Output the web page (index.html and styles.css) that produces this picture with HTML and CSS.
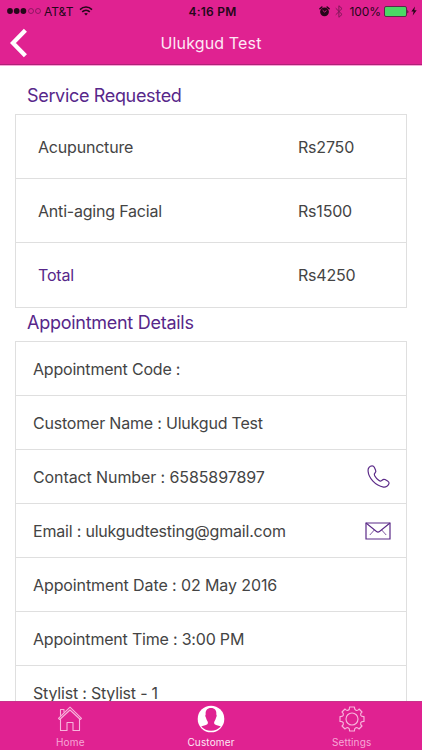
FILE: index.html
```
<!DOCTYPE html>
<html lang="en">
<head>
<meta charset="utf-8">
<meta name="viewport" content="width=device-width">
<title>Ulukgud Test</title>
<link rel="stylesheet" href="styles.css">
</head>
<body>
<div class="app">
  <header class="header">
    <div class="status">
      <div class="status-left">
        <svg width="36" height="8" viewBox="0 0 36 8"><g fill="#250719"><circle cx="3" cy="4" r="2.9"/><circle cx="9.700" cy="4" r="2.9"/><circle cx="16.400" cy="4" r="2.9"/></g><g fill="none" stroke="#6e1450" stroke-width=".7"><circle cx="24" cy="4" r="2.5"/><circle cx="31" cy="4" r="2.5"/></g></svg>
        <span class="carrier">AT&amp;T</span>
        <svg width="14" height="10" viewBox="0 0 14 10" fill="none" stroke="#250719" stroke-width="1.5"><path d="M1 3.6C4.4.2 9.600.2 13 3.600M3.200 5.900C5.400 3.800 8.600 3.800 10.800 5.900"/><path d="M7 9.500 5.100 7.600Q7 6.200 8.900 7.600Z" fill="#250719" stroke="none"/></svg>
      </div>
      <span class="clock">4:16 PM</span>
      <div class="status-right">
        <svg width="11" height="11" viewBox="0 0 11 11"><circle cx="5.500" cy="5.800" r="4.400" fill="#250719"/><path d="M.9 2.800 2.900 1M10.100 2.800 8.100 1" stroke="#250719" stroke-width="1.500" stroke-linecap="round"/><path d="M3.600 4.200 5.500 6 7.500 4.600" fill="none" stroke="#e02291" stroke-width=".9"/></svg>
        <svg class="bluetooth" width="8" height="13" viewBox="0 0 7 12" fill="none" stroke="#7d1857" stroke-width=".9"><path d="M.5 3 6.300 8.700 3.400 11.300V.7L6.300 3.300.5 9"/></svg>
        <span class="percent">100%</span>
        <svg width="25" height="11" viewBox="0 0 25 11"><rect x=".5" y=".5" width="22" height="10" rx="1.500" fill="#4bd865" stroke="#5b2949"/><path d="M23.500 3.500Q25 5.500 23.500 7.500Z" fill="#250719"/></svg>
        <svg class="bolt" width="6" height="10" viewBox="0 0 6 10"><path d="M4 .4.3 5.400H2.600L1.700 9.600 5.700 4.300H3.300Z" fill="#250719"/></svg>
      </div>
    </div>
    <div class="navbar">
      <svg class="back" width="18" height="30" viewBox="0 0 18 30"><path d="M15.400 2.200 2.900 15 15.400 27.800" fill="none" stroke="#fff" stroke-width="4.300"/></svg>
      <h1 class="title">Ulukgud Test</h1>
    </div>
  </header>

  <main class="content">
    <h2 class="heading">Service Requested</h2>
    <div class="card services">
      <div class="row"><span>Acupuncture</span><span class="price">Rs2750</span></div>
      <div class="row"><span>Anti-aging Facial</span><span class="price">Rs1500</span></div>
      <div class="row"><span class="total">Total</span><span class="price">Rs4250</span></div>
    </div>
    <h2 class="heading details-heading">Appointment Details</h2>
    <div class="card details">
      <div class="row"><span>Appointment Code :</span></div>
      <div class="row"><span>Customer Name : Ulukgud Test</span></div>
      <div class="row"><span class="numeric">Contact Number : 6585897897</span>
        <svg class="phone" width="23" height="23" viewBox="0 0 24 24" fill="none" stroke="#5b2a88" stroke-width="1.250" stroke-linejoin="round"><path d="M5.300 1C2.800 1 .8 3.300 1.100 6.200C1.700 13.500 8.700 21.600 17.200 23C19.700 23.400 22.500 21.600 23 19.200C23.200 18.200 22.600 17.400 21.500 16.700L18.800 15.200C17.400 14.500 16.600 15 15.800 15.900C14.800 17.100 13.600 16.900 12.200 15.900C10.700 14.800 9 13 8 11.200C7.200 9.800 7.400 9 8.500 8.100C9.500 7.300 9.400 6.400 8.900 5.300L7.600 2.400C7.200 1.500 6.500 1 5.300 1Z"/></svg>
      </div>
      <div class="row"><span>Email : ulukgudtesting@gmail.com</span>
        <svg class="mail" width="26" height="18" viewBox="0 0 26 18" fill="none" stroke="#5b2a88"><path d="M1 1H25V17H1Z" stroke-width="1.200"/><path d="M1 1 11.500 9.500Q13 10.700 14.500 9.500L25 1" stroke-width="1.100"/><path d="M9.300 8 4.800 13M16.700 8 21.200 13" stroke-width=".8"/></svg>
      </div>
      <div class="row"><span class="numeric">Appointment Date : 02 May 2016</span></div>
      <div class="row"><span>Appointment Time : 3:00 PM</span></div>
      <div class="row"><span>Stylist : Stylist - 1</span></div>
    </div>
  </main>

  <nav class="tabs">
    <div class="tab">
      <svg width="26" height="26" viewBox="0 0 26 26" fill="none" stroke="#f7b4dc" stroke-width="1.100" stroke-linejoin="round"><path d="M3.500 12.500V24.500H10V16.500H16V24.500H22.500V12.500"/><path d="M1.500 12.300 13 1.200 24.500 12.300 23.300 13.500 13 4 2.700 13.500Z"/><path d="M3.500 9.800V3.500H7V6.600"/></svg>
      <span>Home</span>
    </div>
    <div class="tab active">
      <svg width="28" height="28" viewBox="0 0 28 28"><circle cx="14" cy="14" r="13.300" fill="#fff"/><path d="M4.200 21.500C5.500 20.700 9 20.200 10.300 19.200C11.200 18.400 11 17 10.300 16C9.500 14.800 9.300 14 9 12.800C8.200 11.800 8.100 10.200 8.700 9.600C8.200 5.400 10.200 3 14 3S19.800 5.400 19.300 9.600C19.900 10.200 19.800 11.800 19 12.800C18.700 14 18.500 14.800 17.700 16C17 17 16.800 18.400 17.700 19.200C19 20.200 22.500 20.700 23.800 21.500C18.800 27.200 9.200 27.200 4.200 21.500Z" fill="#e02291"/></svg>
      <span>Customer</span>
    </div>
    <div class="tab">
      <svg width="26" height="26" viewBox="0 0 26 26" fill="none" stroke="#f7b4dc" stroke-width="1.150" stroke-linejoin="round"><circle cx="13" cy="13" r="6"/><path d="M10.600 1H15.400Q15.400 4 17.500 4.500Q19 4.800 20.100 3L23 6Q21.100 7.500 21.700 9.200Q22.300 10.700 25 10.600V15.400Q22.300 15.300 21.700 16.800Q21.100 18.500 23 20L20 23Q18.500 21.100 16.800 21.700Q15.300 22.300 15.400 25H10.600Q10.700 22.300 9.200 21.700Q7.500 21.100 6 23L3 20Q4.900 18.500 4.300 16.800Q3.700 15.300 1 15.400V10.600Q3.700 10.700 4.300 9.200Q4.900 7.500 3 6L6 3Q7.500 4.900 9.200 4.300Q10.700 3.700 10.600 1Z"/></svg>
      <span>Settings</span>
    </div>
  </nav>
</div>
</body>
</html>
```

FILE: styles.css
```
* { box-sizing: border-box; }

body {
  margin: 0;
  background: #fff;
  color: #444;
  font-family: Inter, "Liberation Sans", sans-serif;
}

svg { display: block; flex: none; }

.app {
  display: flex;
  flex-direction: column;
  width: 422px;
  height: 750px;
  overflow: hidden;
}

.header {
  flex: none;
  height: 66px;
  background: #e02291;
  border-bottom: 1px solid #f9a5d8;
  box-shadow: inset 0 -1px #b02077;
}

.status {
  display: grid;
  grid-template-columns: 1fr auto 1fr;
  align-items: center;
  height: 22px;
  padding: 0 5px 0 7px;
  color: #250719;
  font-size: 12px;
}

.status-left,
.status-right { display: flex; align-items: center; }
.status-right { justify-content: flex-end; }
.carrier { margin: 0 6px 0 1px; }
.clock { font-weight: 600; letter-spacing: .2px; padding-left: 1px; }
.bluetooth { margin: 0 7px 0 5px; }
.percent { margin-right: 3px; letter-spacing: -.1px; }
.bolt { margin-left: 2px; }

.navbar {
  display: grid;
  grid-template-columns: 44px 1fr 44px;
  align-items: center;
  height: 42px;
}

.back { margin-left: 10px; }

.title {
  margin: 0;
  color: #fde9f5;
  font-size: 16px;
  font-weight: 400;
  line-height: 20px;
  letter-spacing: .15px;
  text-align: center;
}

.content {
  flex: 1;
  min-height: 0;
  padding: 19px 15px 0;
  overflow: hidden;
}

.heading {
  margin: 0 0 8px 12px;
  color: #57278a;
  font-size: 18px;
  font-weight: 400;
  line-height: 21px;
  letter-spacing: -.33px;
}

.details-heading {
  margin: 4px 0 8px 12px;
  letter-spacing: -.27px;
}

.card { border: 1px solid #dfdfdf; }

.row {
  display: flex;
  align-items: center;
  justify-content: space-between;
  font-size: 16px;
  letter-spacing: -.2px;
  border-bottom: 1px solid #dfdfdf;
}

.row:last-child { border-bottom: 0; }
.services .row { height: 64px; padding: 0 50px 0 22px; }
.details .row { height: 54px; padding: 0 15px 0 17px; }
.price { width: 58px; white-space: nowrap; }
.total { color: #57278a; }
.numeric { letter-spacing: -.1px; }
.phone { margin-right: 1px; }

.tabs {
  display: grid;
  grid-template-columns: repeat(3, 1fr);
  flex: none;
  height: 49px;
  background: #e02291;
  box-shadow: inset 0 1px #c9328b;
}

.tab {
  display: flex;
  flex-direction: column;
  align-items: center;
  justify-content: space-between;
  padding: 5px 0 2px;
  color: #f7a8d7;
  font-size: 10px;
  line-height: 12px;
  letter-spacing: .15px;
}

.tab.active { padding-top: 4px; color: #fde9f5; }
```
